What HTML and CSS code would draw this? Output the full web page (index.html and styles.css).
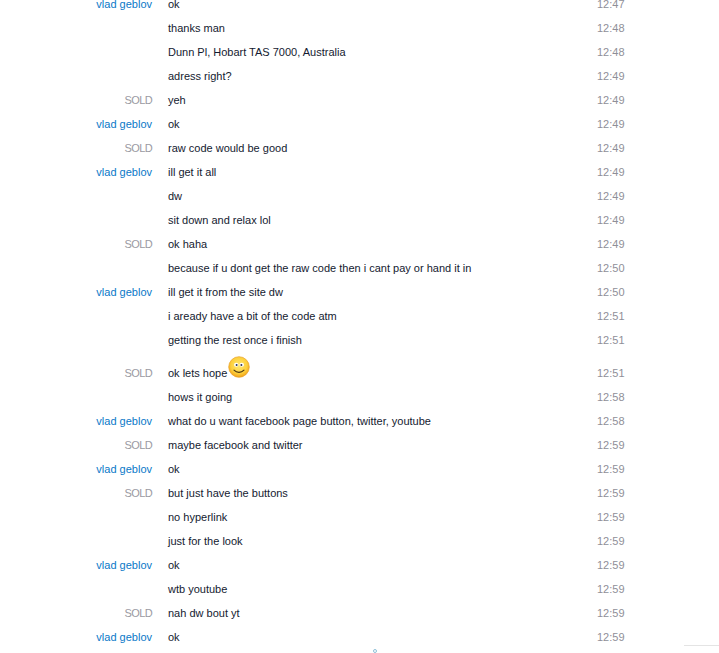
FILE: index.html
```html
<!DOCTYPE html>
<html lang="en">
<head>
<meta charset="utf-8">
<title>Chat</title>
<link rel="stylesheet" href="styles.css">
</head>
<body>
<main class="chat">
<div class="row"><span class="name me">vlad geblov</span><span class="msg">ok</span><time>12:47</time></div>
<div class="row"><span class="name"></span><span class="msg">thanks man</span><time>12:48</time></div>
<div class="row"><span class="name"></span><span class="msg">Dunn Pl, Hobart TAS 7000, Australia</span><time>12:48</time></div>
<div class="row"><span class="name"></span><span class="msg">adress right?</span><time>12:49</time></div>
<div class="row"><span class="name">SOLD</span><span class="msg">yeh</span><time>12:49</time></div>
<div class="row"><span class="name me">vlad geblov</span><span class="msg">ok</span><time>12:49</time></div>
<div class="row"><span class="name">SOLD</span><span class="msg">raw code would be good</span><time>12:49</time></div>
<div class="row"><span class="name me">vlad geblov</span><span class="msg">ill get it all</span><time>12:49</time></div>
<div class="row"><span class="name"></span><span class="msg">dw</span><time>12:49</time></div>
<div class="row"><span class="name"></span><span class="msg">sit down and relax lol</span><time>12:49</time></div>
<div class="row"><span class="name">SOLD</span><span class="msg">ok haha</span><time>12:49</time></div>
<div class="row"><span class="name"></span><span class="msg">because if u dont get the raw code then i cant pay or hand it in</span><time>12:50</time></div>
<div class="row"><span class="name me">vlad geblov</span><span class="msg">ill get it from the site dw</span><time>12:50</time></div>
<div class="row"><span class="name"></span><span class="msg">i aready have a bit of the code atm</span><time>12:51</time></div>
<div class="row"><span class="name"></span><span class="msg">getting the rest once i finish</span><time>12:51</time></div>
<div class="row tall"><span class="name">SOLD</span><span class="msg">ok lets hope <svg class="smile" viewBox="0 0 22 22" width="22" height="22" aria-hidden="true"><defs><radialGradient id="face" cx="50%" cy="42%" r="60%"><stop offset="0" stop-color="#ffe873"/><stop offset=".65" stop-color="#fdd03c"/><stop offset="1" stop-color="#f09a12"/></radialGradient></defs><circle cx="11" cy="11" r="10.3" fill="url(#face)" stroke="#e8a32a" stroke-width=".7"/><ellipse cx="8.2" cy="8.8" rx="2.2" ry="2" fill="#fff"/><ellipse cx="13.8" cy="8.8" rx="2.2" ry="2" fill="#fff"/><circle cx="8.6" cy="9" r="1" fill="#2f3550"/><circle cx="13.4" cy="9" r="1" fill="#2f3550"/><path d="M6 14.2c1.6 1.7 3.2 2.2 5 2.2s3.4-.5 5-2.2" fill="none" stroke="#4a3410" stroke-width="1.1" stroke-linecap="round"/></svg></span><time>12:51</time></div>
<div class="row"><span class="name"></span><span class="msg">hows it going</span><time>12:58</time></div>
<div class="row"><span class="name me">vlad geblov</span><span class="msg">what do u want facebook page button, twitter, youtube</span><time>12:58</time></div>
<div class="row"><span class="name">SOLD</span><span class="msg">maybe facebook and twitter</span><time>12:59</time></div>
<div class="row"><span class="name me">vlad geblov</span><span class="msg">ok</span><time>12:59</time></div>
<div class="row"><span class="name">SOLD</span><span class="msg">but just have the buttons</span><time>12:59</time></div>
<div class="row"><span class="name"></span><span class="msg">no hyperlink</span><time>12:59</time></div>
<div class="row"><span class="name"></span><span class="msg">just for the look</span><time>12:59</time></div>
<div class="row"><span class="name me">vlad geblov</span><span class="msg">ok</span><time>12:59</time></div>
<div class="row"><span class="name"></span><span class="msg">wtb youtube</span><time>12:59</time></div>
<div class="row"><span class="name">SOLD</span><span class="msg">nah dw bout yt</span><time>12:59</time></div>
<div class="row"><span class="name me">vlad geblov</span><span class="msg">ok</span><time>12:59</time></div>
</main>
<span class="dot"></span>
<span class="rule"></span>
</body>
</html>
```
FILE: styles.css
```css
html, body {
  margin: 0;
  height: 100%;
  overflow: hidden;
  background: #fff;
}
body {
  position: relative;
  font-family: "Liberation Sans", Arial, sans-serif;
  font-size: 11px;
}
.chat {
  margin-top: -8px;
}
.row {
  display: grid;
  grid-template-columns: 152px 1fr 122px;
  column-gap: 16px;
  height: 24px;
  line-height: 24px;
  color: #141a30;
}
.row.tall {
  height: 33px;
  line-height: 42px;
}
.name {
  text-align: right;
  color: #9a9aa2;
  letter-spacing: -0.6px;
}
.name.me {
  color: #0a78c8;
  letter-spacing: 0;
}
.msg {
  white-space: nowrap;
}
time {
  color: #8f8f98;
}
.smile {
  position: absolute;
  left: 228px;
  top: 356px;
}
.dot {
  position: absolute;
  left: 373px;
  top: 649px;
  width: 2px;
  height: 2px;
  border: 1px solid #8fc0d8;
  border-radius: 50%;
}
.rule {
  position: absolute;
  left: 684px;
  top: 645px;
  width: 35px;
  height: 1px;
  background: #e4e4e4;
}
```
